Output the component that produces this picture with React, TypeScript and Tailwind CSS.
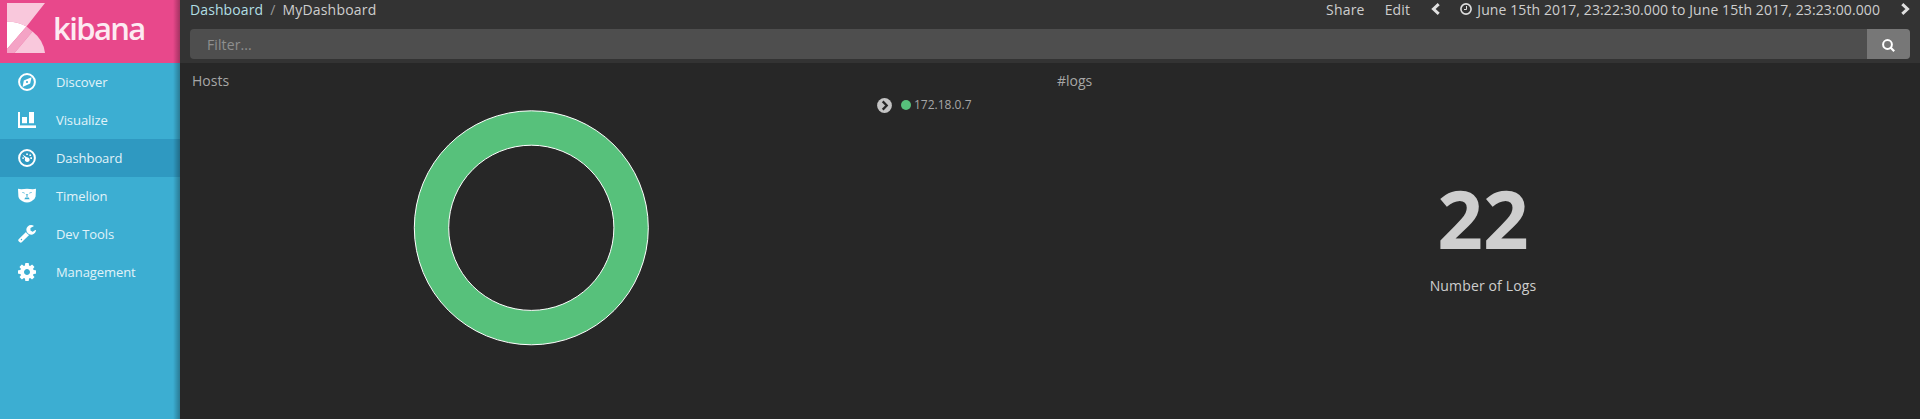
import type { ReactNode } from 'react';

function CompassIcon() {
  return (
    <svg className="h-[18px] w-[18px]" viewBox="0 0 18 18">
      <circle cx="9" cy="9" r="7.9" fill="none" stroke="#fff" strokeWidth="2" />
      <path fill="#fff" fillRule="evenodd" d="M13.6 4.2 L12.2 10.400 L4.6 13.9 L5.8 7.600 Z M9 7.900 A1.1 1.1 0 1 0 9 10.1 A1.1 1.1 0 1 0 9 7.900 Z" />
    </svg>
  );
}

function BarsIcon() {
  return (
    <svg className="h-[18px] w-[18px]" viewBox="0 0 18 18">
      <path fill="#fff" d="M0 1H2V14H18V17H0Z M4 6H9V12.3H4Z M11 1H16V12.3H11Z" />
      <path fill="#3caed2" d="M2 14H18V14.4H2Z" />
    </svg>
  );
}

function GaugeIcon() {
  return (
    <svg className="h-[18px] w-[18px]" viewBox="0 0 18 18">
      <circle cx="9" cy="9" r="7.9" fill="none" stroke="#fff" strokeWidth="2" />
      <path fill="#fff" d="M4.4 5.4 L8.8 8.2 C10.8 8.200 12 9.5 11.6 11.3 C11.1 13.3 8.400 13.6 7.2 12 C6.600 11.2 6.8 10.400 7.2 9.600 Z" />
      <path fill="#fff" d="M8.2 4.4h1.7v1.7H8.2Z M11.400 5.4h1.700v1.700h-1.700Z M12.300 8.200h1.700v1.700h-1.700Z M4.400 8.300h1.400v1.600H4.400Z" />
    </svg>
  );
}

function LionIcon() {
  return (
    <svg className="h-[18px] w-[18px]" viewBox="0 0 18 18">
      <path fill="#fff" d="M0 1.8 L3.2 2.300 Q9 1.300 14.8 2.300 L18 1.800 L17.600 9.600 Q17 12.800 13.5 14.300 Q9 16.800 4.5 14.300 Q1 12.8 .4 9.600 Z" />
      <path fill="#3caed2" d="M4.300 5 L7 5.900 L6.600 6.500 L4.300 5.800 Z M13.700 5 L11 5.900 L11.4 6.500 L13.700 5.800 Z M7.600 7.200h2.800L9.500 8.300v1.700h-1V8.300Z M7.300 10.600h3.400l1 1.700H6.300Z" />
    </svg>
  );
}

function WrenchIcon() {
  return (
    <svg className="h-[18px] w-[18px]" viewBox="0 0 1664 1664">
      <path
        fill="#fff"
        d="M384 1344q0-26-19-45t-45-19-45 19-19 45 19 45 45 19 45-19 19-45zm644-420l-682 682q-37 37-90 37-52 0-91-37l-106-108q-38-36-38-90 0-53 38-91l681-681q39 98 114.500 173.500t173.500 114.500zm634-435q0 39-23 106-47 134-164.500 217.500t-258.500 83.500q-185 0-316.500-131.500t-131.500-316.500 131.500-316.500 316.500-131.500q58 0 121.500 16.500t107.500 46.500q16 11 16 28t-16 28l-293 169v224l193 107q5-3 79-48.500t135.500-81 70.500-35.500q15 0 23.500 10t8.500 25z"
      />
    </svg>
  );
}

function GearIcon() {
  return (
    <svg className="h-[18px] w-[18px]" viewBox="0 0 1536 1536">
      <path
        fill="#fff"
        d="M1024 768q0-106-75-181t-181-75-181 75-75 181 75 181 181 75 181-75 75-181zm512-109v222q0 12-8 23t-20 13l-185 28q-19 54-39 91 35 50 107 138 10 12 10 25t-9 23q-27 37-99 108t-94 71q-12 0-26-9l-138-108q-44 23-91 38-16 136-29 186-7 28-36 28h-222q-14 0-24.500-8.500t-11.500-21.500l-28-184q-49-16-90-37l-141 107q-10 9-25 9-14 0-25-11-126-114-165-168-7-10-7-23 0-12 8-23 15-21 51-66.500t54-70.500q-27-50-41-99l-183-27q-13-2-21-12.500t-8-23.500v-222q0-12 8-23t19-13l186-28q14-46 39-92-40-57-107-138-10-12-10-24 0-10 9-23 26-36 98.500-107.500t94.500-71.500q13 0 26 10l138 107q44-23 91-38 16-136 29-186 7-28 36-28h222q14 0 24.500 8.500t11.500 21.500l28 184q49 16 90 37l142-107q9-9 24-9 13 0 25 10 129 119 165 170 7 8 7 22 0 12-8 23-15 21-51 66.500t-54 70.500q26 50 41 98l183 28q13 2 21 12.500t8 23.500z"
      />
    </svg>
  );
}

function Logo() {
  return (
    <svg className="h-[50px] w-[38px] shrink-0" viewBox="0 0 38 50">
      <path fill="#f9c8dc" d="M0 0H38L19.500 23.500Q11 18.500 0 18.800Z" />
      <path fill="#fff" d="M0 18.800Q11 18.500 19.500 23.500L0 46Z" />
      <path fill="#f4a3c5" d="M19.500 23.500L25.500 28.500L7.500 50H0V46Z" />
      <path fill="#f9c8dc" d="M25.500 28.500Q36.500 37 38 50H7.500Z" />
    </svg>
  );
}

function NavItem({ icon, label, active = false }: { icon: ReactNode; label: string; active?: boolean }) {
  return (
    <a className={`flex h-[38px] items-center pl-[18px] text-[13px] ${active ? 'bg-[#2f99c1]' : ''}`}>
      {icon}
      <span className="ml-5 pt-[2px] tracking-[-0.08px] text-[#e1f3f9]">{label}</span>
    </a>
  );
}

function Chevron({ flip = false }: { flip?: boolean }) {
  return (
    <svg className={`h-3 w-[9px] ${flip ? '-scale-x-100' : ''}`} viewBox="0 0 9 12">
      <path d="M1.300 1.200L6.500 6L1.300 10.800" fill="none" stroke="#e0e0e0" strokeWidth="3" />
    </svg>
  );
}

export default function App() {
  return (
    <div className="flex h-[419px] w-full overflow-hidden bg-[#272727] font-['Open_Sans','Noto_Sans',sans-serif] text-[14px] text-[#cecece]">
      <aside className="relative w-[180px] shrink-0 bg-[#3caed2]">
        <div className="flex h-[63px] items-start bg-[#e8488b] pt-[3px] pl-[7px]">
          <Logo />
          <span className="ml-[8px] text-[31px] leading-[50px] font-semibold tracking-[-1.600px] text-[#fdeaf2]">kibana</span>
        </div>
        <nav>
          <NavItem icon={<CompassIcon />} label="Discover" />
          <NavItem icon={<BarsIcon />} label="Visualize" />
          <NavItem icon={<GaugeIcon />} label="Dashboard" active />
          <NavItem icon={<LionIcon />} label="Timelion" />
          <NavItem icon={<WrenchIcon />} label="Dev Tools" />
          <NavItem icon={<GearIcon />} label="Management" />
        </nav>
        <div className="absolute inset-y-0 right-0 w-[7px] bg-linear-to-r from-transparent to-black/30" />
      </aside>

      <main className="flex min-w-0 flex-1 flex-col">
        <header className="h-[63px] bg-[#333333] px-[10px]">
          <div className="flex h-[29px] justify-between leading-5 tracking-[0.1px]">
            <div className="flex">
              <span className="text-[#b1dfe3]">Dashboard</span>
              <span className="mx-[7px] text-[#999]">/</span>
              <span className="tracking-[0.2px]">MyDashboard</span>
            </div>
            <div className="flex">
              <span className="tracking-[0.2px]">Share</span>
              <span className="ml-[20px] tracking-[0.2px]">Edit</span>
              <span className="mt-[3px] ml-[21px]"><Chevron flip /></span>
              <svg className="mt-[3px] ml-[20px] h-3 w-3" viewBox="0 0 12 12">
                <circle cx="6" cy="6" r="5.100" fill="none" stroke="#dedede" strokeWidth="1.600" />
                <path d="M6.500 3V6.500H4" fill="none" stroke="#dedede" strokeWidth="1" />
              </svg>
              <span className="ml-[5px]">June 15th 2017, 23:22:30.000 to June 15th 2017, 23:23:00.000</span>
              <span className="mt-[3px] ml-[21px]"><Chevron /></span>
            </div>
          </div>
          <div className="flex h-[30px] overflow-hidden rounded-[4px] bg-[#4e4e4e]">
            <div className="flex flex-1 items-center pl-[17px] tracking-[0.1px] text-[#8f8f8f]">Filter...</div>
            <div className="flex w-[43px] items-center justify-center bg-[#777777]">
              <svg className="mt-[2px] h-[13px] w-[13px]" viewBox="0 0 13 13">
                <circle cx="5.500" cy="5.500" r="4.400" fill="none" stroke="#fff" strokeWidth="2" />
                <path d="M8.500 8.500L12.200 12.200" stroke="#fff" strokeWidth="2.200" />
              </svg>
            </div>
          </div>
        </header>

        <div className="flex flex-1 text-[#a6a6a6]">
          <section className="w-[865px] pt-[8px] pl-[12px]">
            <h2 className="leading-5">Hosts</h2>
            <div className="flex">
              <svg className="mt-[19px] ml-[221px] h-[236px] w-[236px]" viewBox="0 0 236 236">
                <circle cx="118.300" cy="117.800" r="99.800" fill="none" stroke="#57c17b" strokeWidth="34.400" />
                <circle cx="118.300" cy="117.800" r="117" fill="none" stroke="#fff" strokeWidth="1" />
                <circle cx="118.300" cy="117.800" r="82.600" fill="none" stroke="#fff" strokeWidth="1" />
              </svg>
              <div className="mt-[4px] ml-[228px] flex h-[20px] items-center text-[12px]">
                <svg className="h-[15px] w-[15px]" viewBox="0 0 15 15">
                  <circle cx="7.500" cy="7.500" r="7.400" fill="#c4c4c4" />
                  <path d="M5.700 3.400L9.700 7.500L5.700 11.600" fill="none" stroke="#272727" strokeWidth="2.300" />
                </svg>
                <span className="ml-[9px] h-[10px] w-[10px] rounded-full bg-[#57c17b]" />
                <span className="ml-[3px]">172.18.0.7</span>
              </div>
            </div>
          </section>
          <section className="flex-1 pt-[8px] pl-[12px]">
            <h2 className="leading-5">#logs</h2>
            <div className="flex flex-col items-center pt-[72px] pr-[11px] text-[#cecece]">
              <div className="text-[80px] leading-[110px] font-bold">22</div>
              <div className="mt-[3px] leading-5 tracking-[0.15px]">Number of Logs</div>
            </div>
          </section>
        </div>
      </main>
    </div>
  );
}
